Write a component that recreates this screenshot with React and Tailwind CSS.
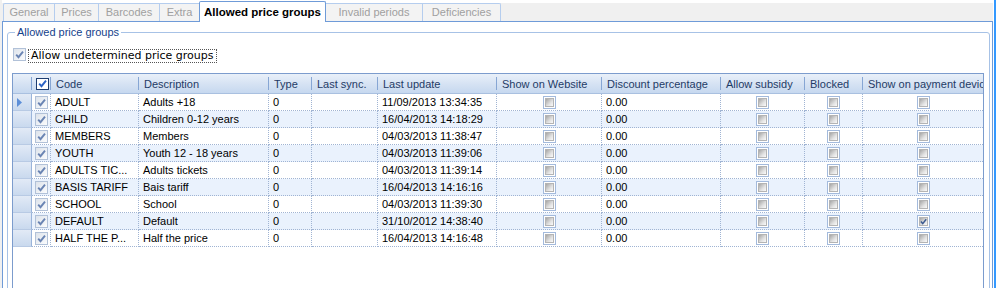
import React from "react";

const cols = [
  { key: "code", label: "Code", w: "w-[88px]" },
  { key: "desc", label: "Description", w: "w-[130px]" },
  { key: "type", label: "Type", w: "w-[43px]" },
  { key: "sync", label: "Last sync.", w: "w-[66px]" },
  { key: "update", label: "Last update", w: "w-[119px]" },
  { key: "web", label: "Show on Website", w: "w-[105px]", check: true },
  { key: "disc", label: "Discount percentage", w: "w-[119px]" },
  { key: "sub", label: "Allow subsidy", w: "w-[84px]", check: true },
  { key: "blk", label: "Blocked", w: "w-[58px]", check: true },
  { key: "pay", label: "Show on payment device", w: "w-[120px]", check: true, last: true },
];

const rows = [
  ["ADULT", "Adults +18", "11/09/2013 13:34:35", false],
  ["CHILD", "Children 0-12 years", "16/04/2013 14:18:29", false],
  ["MEMBERS", "Members", "04/03/2013 11:38:47", false],
  ["YOUTH", "Youth 12 - 18 years", "04/03/2013 11:39:06", false],
  ["ADULTS TIC...", "Adults tickets", "04/03/2013 11:39:14", false],
  ["BASIS TARIFF", "Bais tariff", "16/04/2013 14:16:16", false],
  ["SCHOOL", "School", "04/03/2013 11:39:30", false],
  ["DEFAULT", "Default", "31/10/2012 14:38:40", true],
  ["HALF THE P...", "Half the price", "16/04/2013 14:16:48", false],
];

const Check = ({ color, size = 9 }) => (
  <svg width={size} height={size} viewBox="0 0 9 9" className="block">
    <path d="M1.2 4.6 L3.5 7.2 L8 1.6" fill="none" stroke={color} strokeWidth="1.9" />
  </svg>
);

const GridBox = ({ checked }) => (
  <div className="w-[13px] h-[13px] border border-[#a3badc] bg-white p-[1px]">
    <div className="w-full h-full border border-[#b4b4b4] bg-[linear-gradient(135deg,#a6a6a6,#e2e2e2_60%,#fafafa)] flex items-center justify-center overflow-visible">
      {checked && <Check color="#3b5a91" size={9} />}
    </div>
  </div>
);

const DisBox = () => (
  <div className="w-[13px] h-[13px] border border-[#b1c1d8] bg-[linear-gradient(135deg,#dde3eb,#fbfcfd)] flex items-center justify-center">
    <Check color="#6a84b3" />
  </div>
);

const HeadBox = () => (
  <div className="w-[13px] h-[12px] border border-[#1e3d70] bg-white flex items-center justify-center">
    <Check color="#2b62c4" />
  </div>
);

const Sep = () => <div className="w-px h-[13px] bg-[#86a6d4] shrink-0" />;

export default function App() {
  return (
    <div className="w-[996px] h-[288px] overflow-hidden flex bg-white font-['Liberation_Sans',Arial,sans-serif] text-[11px] text-black">
      <div className="w-[2px] shrink-0 bg-[#f0f0f0]" />
      <div className="w-[991px] shrink-0 flex flex-col">
        {/* tab strip */}
        <div className="h-[22px] shrink-0 flex items-end border-b border-[#6f9bd8] bg-[linear-gradient(to_bottom,#ffffff_3px,#f0f0f0_3px)] pl-[1px]">
          <div className="w-[51px] h-[18px] border-l border-t border-[#b5cdee] bg-[#f3f3f3] text-[#a0a0a0] flex items-center justify-center rounded-tl-[2px]">General</div>
          <div className="w-[44px] h-[18px] border-l border-t border-[#b5cdee] bg-[#f3f3f3] text-[#a0a0a0] flex items-center justify-center">Prices</div>
          <div className="w-[61px] h-[18px] border-l border-t border-[#b5cdee] bg-[#f3f3f3] text-[#a0a0a0] flex items-center justify-center">Barcodes</div>
          <div className="w-[40px] h-[18px] border-l border-t border-[#b5cdee] bg-[#f3f3f3] text-[#a0a0a0] flex items-center justify-center">Extra</div>
          <div className="relative w-[127px] h-[21px] -mb-px border border-b-0 border-[#6f9bd8] bg-white font-bold text-[11.5px] flex items-center justify-center pt-[1px] rounded-t-[2px]">Allowed price groups</div>
          <div className="w-[97px] h-[18px] border-r border-t border-[#b5cdee] bg-[#f3f3f3] text-[#a0a0a0] flex items-center justify-center">Invalid periods</div>
          <div className="w-[78px] h-[18px] border-r border-t border-[#b5cdee] bg-[#f3f3f3] text-[#a0a0a0] flex items-center justify-center rounded-tr-[2px]">Deficiencies</div>
        </div>

        {/* panel */}
        <div className="flex-1 border-x border-[#6f9bd8] bg-white pl-[4px] pr-[2px] pt-[10px]">
          <div className="relative h-[300px] border border-[#a7c2e6] rounded-t-[3px] pl-[4px] pt-[14px]">
            <div className="absolute left-[7px] -top-[8px] px-[2px] bg-white text-[#15428b] leading-[14px]">Allowed price groups</div>

            <div className="h-[16px] flex items-start pl-[1px]">
              <div className="mt-[1px]"><DisBox /></div>
              <div className="ml-[2px] mt-[2px] h-[14px] border border-dotted border-[#555] px-[2px] font-['DejaVu_Sans',Verdana,sans-serif] text-[11px] leading-[12px] whitespace-nowrap">
                Allow undetermined price groups
              </div>
            </div>

            {/* grid */}
            <div className="mt-[10px] w-[972px] h-[300px] border border-[#7c9ccd] bg-white">
              {/* header */}
              <div className="h-[20px] flex border-b border-[#a9c0e0] bg-[linear-gradient(to_bottom,#e9f0f9,#d5e2f3_55%,#c6d8ef)] text-[#1f3b66]">
                <div className="w-[19px] flex items-center justify-end"><Sep /></div>
                <div className="w-[19px] flex items-center">
                  <div className="flex-1 flex justify-center pl-[2px]"><HeadBox /></div>
                  <Sep />
                </div>
                {cols.map((c) => (
                  <div key={c.key} className={`${c.w} flex items-center overflow-hidden`}>
                    <div className="flex-1 pl-[5px] whitespace-nowrap overflow-hidden pt-[2px]">{c.label}</div>
                    {!c.last && <Sep />}
                  </div>
                ))}
              </div>
              {/* rows */}
              {rows.map((r, i) => (
                <div key={i} className="flex h-[17px]">
                  <div className="w-[19px] h-[17px] border-r border-b border-r-[#9ab4da] border-b-[#b8cae4] bg-[linear-gradient(to_bottom,#e2eaf6,#c9d9ee)] flex items-center pl-[4px]">
                    {i === 0 && (
                      <svg width="6" height="9" viewBox="0 0 6 9" className="block">
                        <polygon points="0,0 5,4.5 0,9" fill="#5d8fd8" />
                      </svg>
                    )}
                  </div>
                  <div className={`flex ${i % 2 === 1 ? "bg-[#eaf2fd]" : "bg-white"}`}>
                    <div className="w-[19px] h-[17px] border-r border-b border-dotted border-[#a0b4d3] flex items-center justify-center">
                      <DisBox />
                    </div>
                    {cols.map((c) => {
                      let content = null;
                      if (c.key === "code") content = r[0];
                      else if (c.key === "desc") content = r[1];
                      else if (c.key === "type") content = "0";
                      else if (c.key === "update") content = r[2];
                      else if (c.key === "disc") content = "0.00";
                      return (
                        <div
                          key={c.key}
                          className={`${c.w} h-[17px] border-b border-dotted border-[#a0b4d3] ${c.last ? "" : "border-r"} flex items-center ${c.check ? "justify-center" : "pl-[4px]"} whitespace-nowrap overflow-hidden`}
                        >
                          {c.check ? <GridBox checked={c.key === "pay" && r[3]} /> : content}
                        </div>
                      );
                    })}
                  </div>
                </div>
              ))}
            </div>
          </div>
        </div>
      </div>
      <div className="w-px shrink-0 bg-white" />
      <div className="w-[2px] shrink-0 bg-[#3399ff]" />
    </div>
  );
}
